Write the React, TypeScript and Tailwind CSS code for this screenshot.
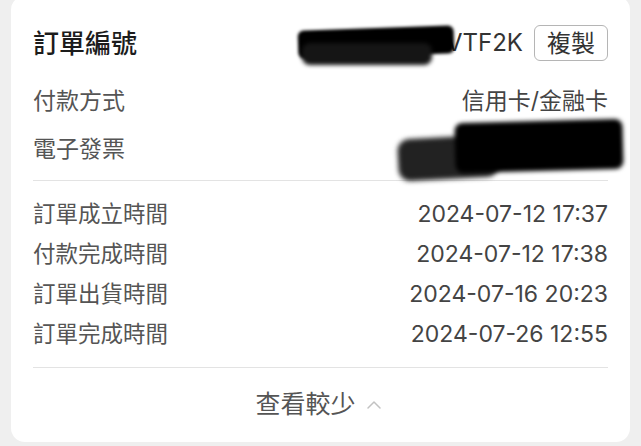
import { ChevronUp } from "lucide-react";

const times = [
  { label: "訂單成立時間", value: "2024-07-12 17:37" },
  { label: "付款完成時間", value: "2024-07-12 17:38" },
  { label: "訂單出貨時間", value: "2024-07-16 20:23" },
  { label: "訂單完成時間", value: "2024-07-26 12:55" },
];

export default function App() {
  return (
    <div
      className="min-h-screen bg-[#efefef] px-[11px] pb-[6px] overflow-hidden"
      style={{ fontFamily: 'Inter, "Noto Sans CJK TC", sans-serif' }}
    >
      <div className="mt-[-4px] rounded-[14px] bg-white px-[22px] pt-[24px]">
        {/* order number */}
        <div className="flex h-[46px] items-center justify-between">
          <span className="text-[26px] font-medium text-[#1c1c1c]">訂單編號</span>
          <div className="flex items-center gap-[11px]">
            <div className="relative text-[24px] text-[#333]">
              <span className="pl-[150px]">VTF2K</span>
              {/* redaction */}
              <div className="absolute left-[2px] top-[3px] h-[28px] w-[156px] -rotate-[2deg] rounded-[6px] bg-black blur-[1.5px]" />
              <div className="absolute left-[6px] top-[18px] h-[22px] w-[130px] rounded-[8px] bg-[#151515] blur-[2px]" />
            </div>
            <button className="h-[36px] w-[74px] rounded-[6px] border border-[#b5b5b5] text-[24px] text-[#333]">
              複製
            </button>
          </div>
        </div>

        <div className="mt-[11px] flex h-[48px] items-center justify-between text-[23px]">
          <span className="text-[#555]">付款方式</span>
          <span className="text-[#444]">信用卡/金融卡</span>
        </div>
        <div className="relative flex h-[48px] items-center justify-between text-[23px]">
          <span className="text-[#555]">電子發票</span>
          {/* redaction */}
          <div className="absolute right-[110px] top-[12px] h-[42px] w-[100px] -rotate-[3deg] rounded-[12px] bg-[#222] blur-[2.5px]" />
          <div className="absolute right-[-15px] top-[-4px] h-[50px] w-[168px] -rotate-[1.5deg] rounded-[8px] bg-black blur-[2px]" />
        </div>

        <div className="mt-[7px] border-t border-[#e3e3e3]" />

        <div className="pt-[13px]">
          {times.map((t) => (
            <div key={t.label} className="flex h-[40px] items-center justify-between">
              <span className="text-[22.5px] text-[#555]">{t.label}</span>
              <span className="text-[23px] text-[#444]">{t.value}</span>
            </div>
          ))}
        </div>

        <div className="mt-[13px] border-t border-[#e3e3e3]" />

        <div className="flex h-[74px] items-center justify-center gap-[6px]">
          <span className="text-[25px] text-[#555]">查看較少</span>
          <ChevronUp className="h-[24px] w-[24px] text-[#c2c2c2]" strokeWidth={1.5} />
        </div>
      </div>
    </div>
  );
}
